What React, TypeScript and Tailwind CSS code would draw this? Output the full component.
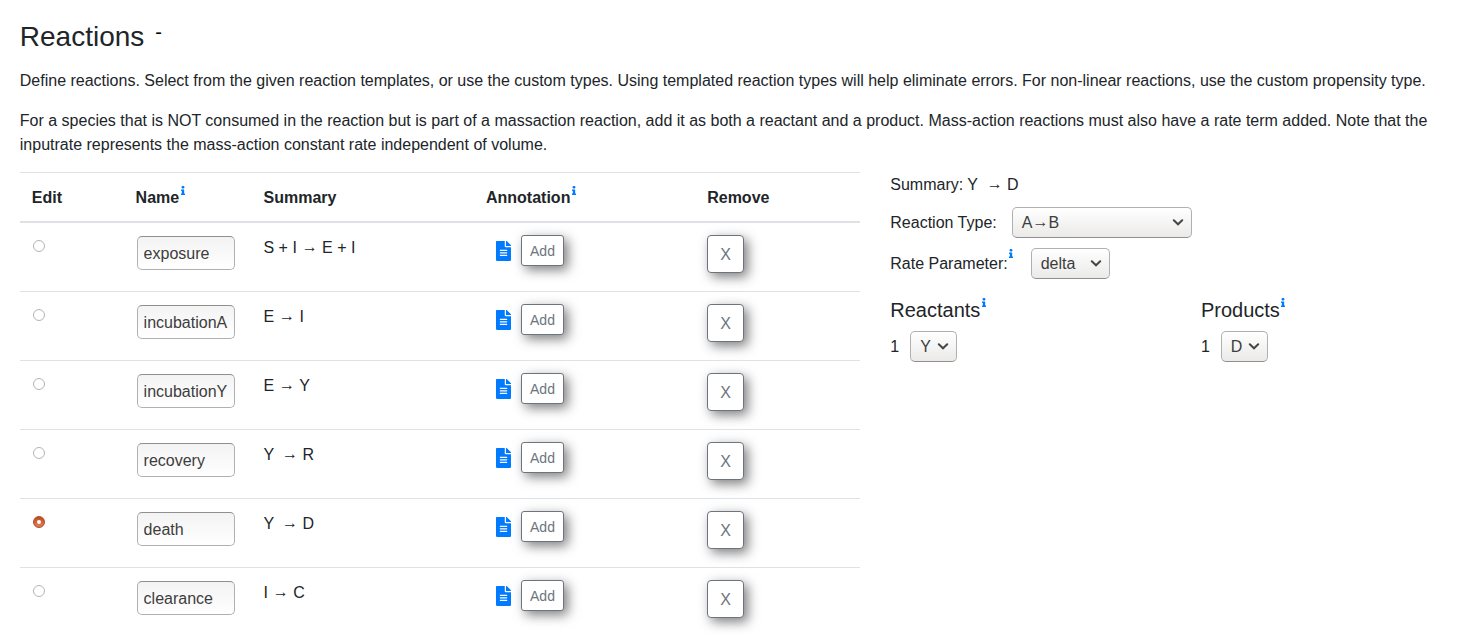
import React from 'react';
import { FaFileAlt, FaInfo } from 'react-icons/fa';

type Reaction = { name: string; left: string; right: string; selected?: boolean };

const reactions: Reaction[] = [
  { name: 'exposure', left: 'S + I ', right: ' E + I' },
  { name: 'incubationA', left: 'E ', right: ' I' },
  { name: 'incubationY', left: 'E ', right: ' Y' },
  { name: 'recovery', left: 'Y  ', right: ' R' },
  { name: 'death', left: 'Y  ', right: ' D', selected: true },
  { name: 'clearance', left: 'I ', right: ' C' },
];

const columns = 'grid grid-cols-[103.8px_127.9px_222.5px_221px_164.8px]';

function Arrow({ className = '' }: { className?: string }) {
  return <span className={`inline-block h-[16px] -translate-y-px leading-[16px] ${className}`}>→</span>;
}

function Info({ className = '' }: { className?: string }) {
  return <FaInfo className={`h-[9px] w-[4px] shrink-0 text-[#007bff] ${className}`} preserveAspectRatio="none" />;
}

function Select({ children, className }: { children: React.ReactNode; className: string }) {
  return (
    <button
      className={`flex h-[31px] items-center justify-between rounded-[5px] border border-[#b0b0b0] border-b-[#8f8f8f] bg-linear-to-b from-white to-[#ebeae9] pr-[7px] pl-[9px] text-[#3d3d3d] ${className}`}
    >
      <span>{children}</span>
      <svg width="12" height="8" viewBox="0 0 12 8" fill="none" stroke="#464646" strokeWidth="2">
        <path d="M1.8 1.3 L6 5.3 L10.2 1.3" strokeLinecap="round" />
      </svg>
    </button>
  );
}

function Radio({ checked }: { checked?: boolean }) {
  return checked ? (
    <span
      role="radio"
      aria-checked="true"
      className="mt-[5px] ml-[1px] flex size-[12px] items-center justify-center rounded-full border border-[#ad4a25] bg-linear-to-b from-[#c04a1d] to-[#e27e58]"
    >
      <span className="size-[4px] rounded-full bg-white" />
    </span>
  ) : (
    <span
      role="radio"
      aria-checked="false"
      className="mt-[5px] ml-[1px] block size-[12px] rounded-full border border-[#b4b4b4] bg-white"
    />
  );
}

function Row({ reaction }: { reaction: Reaction }) {
  return (
    <div className={`${columns} h-[69px] border-b border-[#dee2e6] pt-[12px]`}>
      <div className="pl-[12px]">
        <Radio checked={reaction.selected} />
      </div>
      <div className="pl-[13px]">
        <input
          readOnly
          value={reaction.name}
          className="mt-px block h-[34px] w-[98px] rounded-[5px] border border-[#b0b0b0] border-t-[#8f8f8f] bg-linear-to-b from-[#f3f3f3] to-white px-[6px] pt-[2px] text-[#3d3d3d] outline-none"
        />
      </div>
      <div className="pt-px pl-[12px] whitespace-pre">
        {reaction.left}
        <Arrow className={reaction.left.startsWith('Y') ? '-ml-[0.8px]' : 'ml-[0.4px]'} />
        {reaction.right}
      </div>
      <div className="flex items-start pl-[22px]">
        <FaFileAlt className="mt-[6px] h-[20px] w-[15px] text-[#007bff]" />
        <button className="ml-[10px] h-[31px] w-[43px] rounded-[3px] border border-[#6c757d] bg-white text-sm text-[#6c757d] shadow-[4px_4px_12px_rgba(0,0,0,0.5)]">
          Add
        </button>
      </div>
      <div className="pl-[12px]">
        <button className="block h-[38px] w-[37px] rounded-[4px] border border-[#6c757d] bg-white pt-[2px] text-[#6c757d] shadow-[4px_4px_12px_rgba(0,0,0,0.5)]">
          X
        </button>
      </div>
    </div>
  );
}

function Participant({ title, value }: { title: string; value: string }) {
  return (
    <div className="w-[310.6px] shrink-0">
      <h5 className="flex items-start text-[20px] leading-[24px]">
        {title}
        <Info className="ml-[1.6px]" />
      </h5>
      <div className="mt-[9px] flex items-center">
        <span>1</span>
        <Select className="ml-[11px] w-[47px]">{value}</Select>
      </div>
    </div>
  );
}

export default function App() {
  return (
    <main className="h-[636px] overflow-hidden bg-white px-[19.8px] pt-[20px] font-['Liberation_Sans',Arial,sans-serif] text-[16px] leading-[24px] text-[#212529]">
      <div className="flex h-[34px] items-center">
        <h3 className="text-[28px] leading-[34px]">Reactions</h3>
        <button className="mt-[-11px] ml-[11px] text-[20px] leading-[24px] text-black">-</button>
      </div>
      <p className="mt-[15px] whitespace-nowrap">
        Define reactions. Select from the given reaction templates, or use the custom types. Using templated reaction
        types will help eliminate errors. For non-linear reactions, use the custom propensity type.
      </p>
      <p className="mt-[16px]">
        For a species that is NOT consumed in the reaction but is part of a massaction reaction, add it as both a
        reactant and a product. Mass-action reactions must also have a rate term added. Note that the inputrate
        represents the mass-action constant rate independent of volume.
      </p>
      <div className="mt-[15px] flex">
        <section className="w-[840px] shrink-0">
          <div className={`${columns} h-[51px] border-t border-b-2 border-[#dee2e6] pt-[13px] font-bold`}>
            <div className="pl-[12px]">Edit</div>
            <div className="flex items-start pl-[12px]">
              Name
              <Info className="ml-[1.4px]" />
            </div>
            <div className="pl-[12px]">Summary</div>
            <div className="flex items-start pl-[12px]">
              Annotation
              <Info className="ml-[1.6px]" />
            </div>
            <div className="pl-[12.2px]">Remove</div>
          </div>
          {reactions.map((reaction) => (
            <Row key={reaction.name} reaction={reaction} />
          ))}
        </section>
        <section className="ml-[30.5px] w-[560px] shrink-0">
          <div className="pt-px whitespace-pre">
            {'Summary: Y  '}
            <Arrow />
            {' D'}
          </div>
          <div className="mt-[10px] flex items-center">
            <span>Reaction Type:</span>
            <Select className="ml-[15px] w-[180px]">
              A<Arrow />B
            </Select>
          </div>
          <div className="mt-[10px] flex items-center">
            <span>Rate Parameter:</span>
            <Info className="mt-[-21px] ml-[1.6px]" />
            <Select className="ml-[17.4px] w-[79px]">delta</Select>
          </div>
          <div className="mt-[19px] flex">
            <Participant title="Reactants" value="Y" />
            <Participant title="Products" value="D" />
          </div>
        </section>
      </div>
    </main>
  );
}
